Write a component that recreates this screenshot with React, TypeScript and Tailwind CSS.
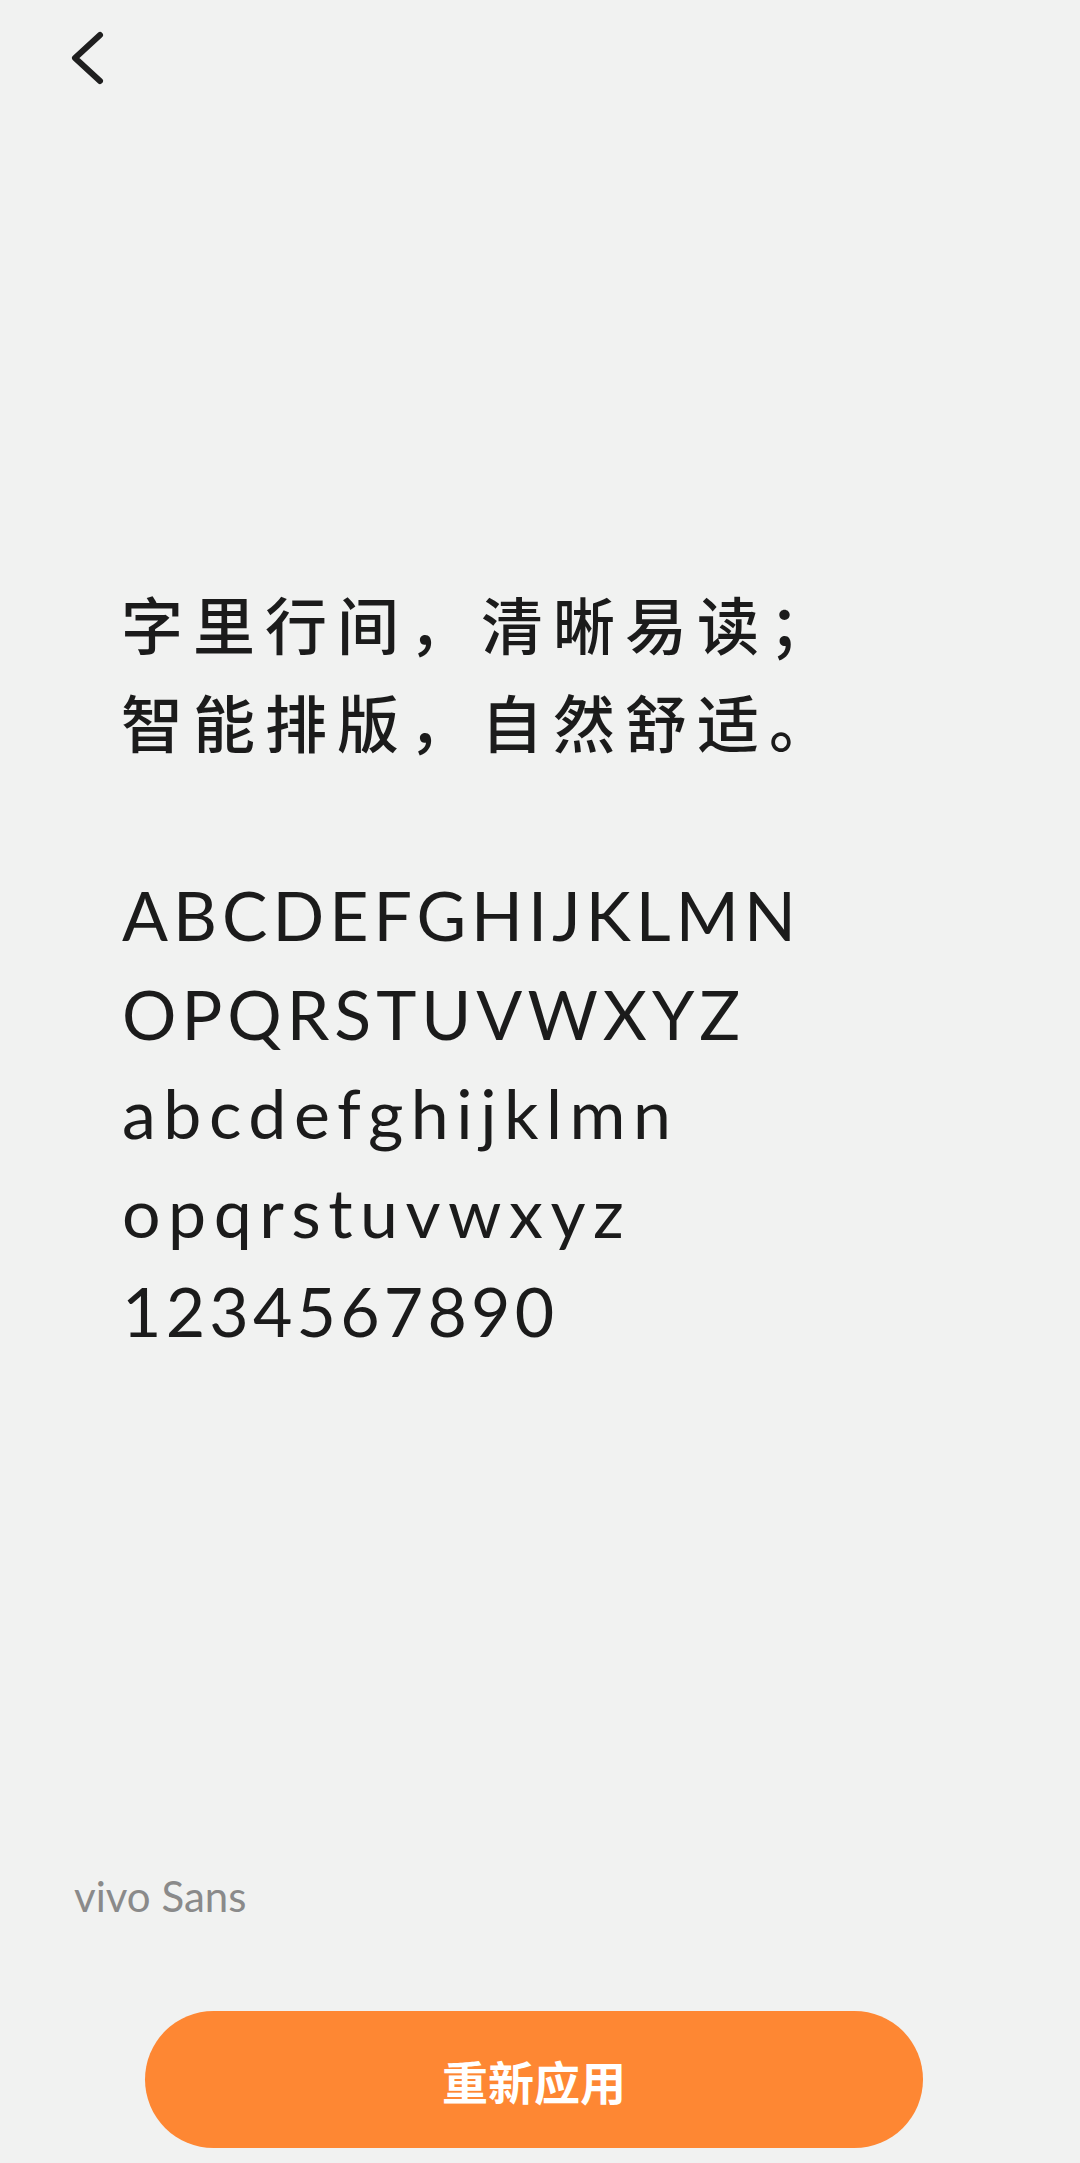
import React from "react";

export default function App() {
  const latin = "font-['Lato','Noto_Sans',sans-serif]";
  const cjk = "font-['Noto_Sans_CJK_SC','Noto_Sans_CJK_JP',sans-serif]";
  return (
    <div className="w-[1080px] h-[2163px] bg-[#f1f2f1] flex flex-col overflow-hidden">
      <div className="pt-[28px] pl-[68px]">
        <svg width="40" height="60" viewBox="0 0 40 60" fill="none">
          <path
            d="M32 7 L7 30 L32 53"
            stroke="#1f1f1f"
            strokeWidth="6"
            strokeLinecap="round"
            strokeLinejoin="round"
          />
        </svg>
      </div>

      <div
        className={`${cjk} mt-[486px] pl-[121px] text-[62px] leading-[98px] tracking-[10px] font-medium text-[#1b1b1b]`}
      >
        <div>字里行间，清晰易读；</div>
        <div>智能排版，自然舒适。</div>
      </div>

      <div
        className={`${latin} mt-[95px] pl-[122px] text-[68px] leading-[99px] text-[#1b1b1b]`}
      >
        <div className="tracking-[5px]">ABCDEFGHIJKLMN</div>
        <div className="tracking-[5px]">OPQRSTUVWXYZ</div>
        <div className="tracking-[7.5px]">abcdefghijklmn</div>
        <div className="tracking-[7.5px]">opqrstuvwxyz</div>
        <div className="tracking-[4.2px]">1234567890</div>
      </div>

      <div
        className={`${latin} mt-[511px] pl-[74px] text-[42px] leading-[50px] text-[#8a8a8a]`}
      >
        vivo Sans
      </div>

      <div className="mt-[90px] ml-[145px] w-[778px] h-[137px] rounded-full bg-[#fe8733] flex items-center justify-center">
        <span className={`${cjk} text-[46px] font-bold text-white leading-none`}>
          重新应用
        </span>
      </div>
    </div>
  );
}
